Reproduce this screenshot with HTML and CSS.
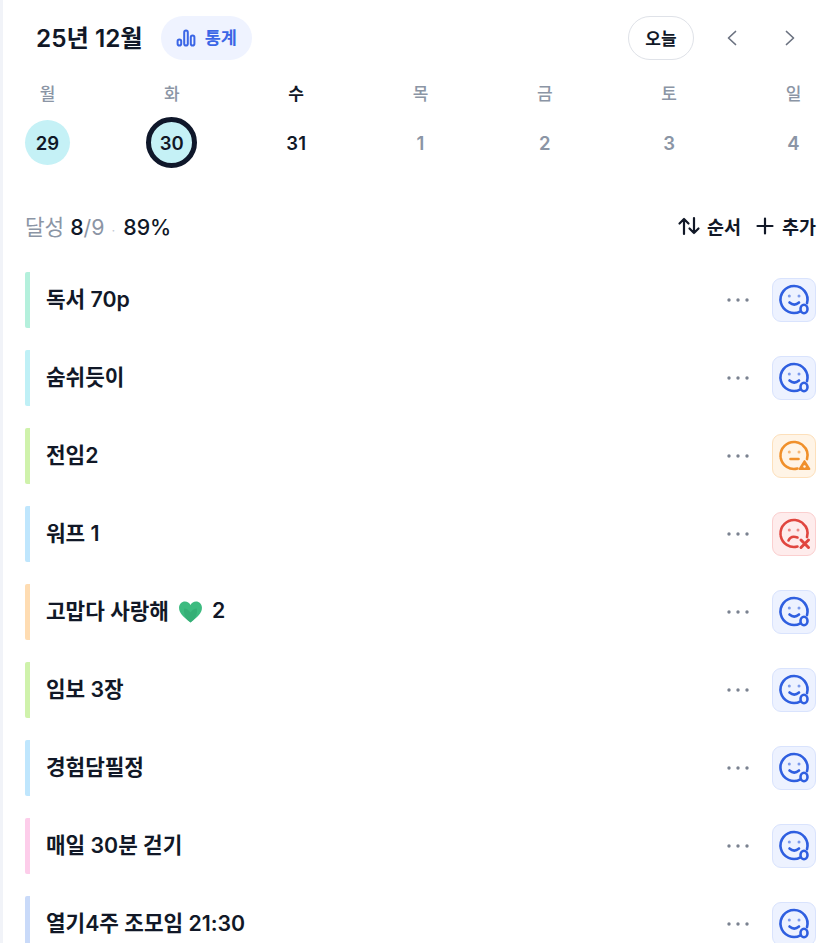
FILE: index.html
```html
<!DOCTYPE html>
<html lang="ko">
<head>
<meta charset="utf-8">
<title>습관</title>
<link rel="stylesheet" href="styles.css">
</head>
<body>
<svg class="defs" width="0" height="0" aria-hidden="true">
  <symbol id="face-ok" viewBox="0 0 44 44">
    <path d="M28.500 33.300A13.500 13.500 0 1 1 35 25.100" fill="none" stroke="currentColor" stroke-width="2.600" stroke-linecap="round"/>
    <circle cx="17.300" cy="18" r="1.500" fill="currentColor" opacity=".6"/>
    <circle cx="27" cy="18" r="1.500" fill="currentColor" opacity=".6"/>
    <path d="M17.500 24.500c3 2.600 6.500 2.600 9.500 0" fill="none" stroke="currentColor" stroke-width="2.600" stroke-linecap="round"/>
    <ellipse cx="32" cy="31" rx="3.500" ry="4.200" fill="none" stroke="currentColor" stroke-width="2.600"/>
  </symbol>
  <symbol id="face-warn" viewBox="0 0 44 44">
    <path d="M25.500 34.500A13.500 13.500 0 1 1 35 25.100" fill="none" stroke="currentColor" stroke-width="2.600" stroke-linecap="round" stroke-dasharray="22 1.500 30 1.500"/>
    <circle cx="17.300" cy="18" r="1.500" fill="currentColor" opacity=".6"/>
    <circle cx="27" cy="18" r="1.500" fill="currentColor" opacity=".6"/>
    <path d="M18.500 25h8" fill="none" stroke="currentColor" stroke-width="2.600" stroke-linecap="round"/>
    <path d="M32.500 27l5 8h-10z" fill="currentColor" stroke="currentColor" stroke-width="1.800" stroke-linejoin="round"/>
    <circle cx="32.500" cy="32.500" r="1.200" fill="#fff4e6"/>
  </symbol>
  <symbol id="face-bad" viewBox="0 0 44 44">
    <path d="M25.500 34.500A13.500 13.500 0 1 1 35 25.100" fill="none" stroke="currentColor" stroke-width="2.600" stroke-linecap="round" stroke-dasharray="22 1.500 30 1.500"/>
    <circle cx="17.300" cy="18" r="1.500" fill="currentColor" opacity=".6"/>
    <circle cx="26" cy="18" r="1.500" fill="currentColor" opacity=".6"/>
    <path d="M16.500 28.500c1.500-3.500 5-4.500 9-3" fill="none" stroke="currentColor" stroke-width="2.600" stroke-linecap="round"/>
    <path d="M29 28l7.500 7.500M36.500 28L29 35.500" fill="none" stroke="currentColor" stroke-width="3" stroke-linecap="round"/>
  </symbol>
  <symbol id="more" viewBox="0 0 22 6">
    <circle cx="2" cy="3" r="1.700"/>
    <circle cx="11" cy="3" r="1.700"/>
    <circle cx="20" cy="3" r="1.700"/>
  </symbol>
</svg>
<main class="page">
  <header class="top">
    <div class="top-left">
      <h1 class="month">25년 12월</h1>
      <button class="stats">
        <svg class="stats-icon" viewBox="0 0 20 20" fill="none" stroke="currentColor" stroke-width="2"><rect x="1.600" y="11.500" width="3.600" height="6" rx="1.800"/><rect x="8.200" y="2.600" width="3.600" height="15" rx="1.800"/><rect x="14.800" y="7.500" width="3.600" height="10" rx="1.800"/></svg>
        <span class="stats-label">통계</span>
      </button>
    </div>
    <div class="top-right">
      <button class="today">오늘</button>
      <button class="nav" aria-label="이전"><svg width="14" height="16" viewBox="0 0 14 16" fill="none" stroke="currentColor" stroke-width="1.700" stroke-linecap="round" stroke-linejoin="round"><path d="M10.500 1.500L3.500 8l7 6.500"/></svg></button>
      <button class="nav" aria-label="다음"><svg width="14" height="16" viewBox="0 0 14 16" fill="none" stroke="currentColor" stroke-width="1.700" stroke-linecap="round" stroke-linejoin="round"><path d="M3.500 1.500l7 6.500-7 6.500"/></svg></button>
    </div>
  </header>

  <section class="week">
    <div class="day"><span class="dow">월</span><span class="num done">29</span></div>
    <div class="day"><span class="dow">화</span><span class="num done current">30</span></div>
    <div class="day active"><span class="dow">수</span><span class="num">31</span></div>
    <div class="day"><span class="dow">목</span><span class="num">1</span></div>
    <div class="day"><span class="dow">금</span><span class="num">2</span></div>
    <div class="day"><span class="dow">토</span><span class="num">3</span></div>
    <div class="day"><span class="dow">일</span><span class="num">4</span></div>
  </section>

  <section class="summary">
    <p class="rate"><span class="muted">달성</span> <b>8</b><span class="muted">/9</span><span class="sep">·</span><b>89%</b></p>
    <div class="actions">
      <button class="action">
        <svg width="24" height="20" viewBox="0 0 24 20" fill="none" stroke="currentColor" stroke-width="2.200" stroke-linecap="round" stroke-linejoin="round"><path d="M7 18V3M2.500 7.500L7 3l4.500 4.500M17 2v15M12.500 12.500L17 17l4.500-4.500"/></svg>
        <span>순서</span>
      </button>
      <button class="action action-add">
        <svg width="18" height="18" viewBox="0 0 18 18" fill="none" stroke="currentColor" stroke-width="2.200" stroke-linecap="round"><path d="M9 1.500v15M1.500 9h15"/></svg>
        <span>추가</span>
      </button>
    </div>
  </section>

  <ul class="list">
    <li class="item c-mint"><span class="name">독서 70p</span><svg class="dots"><use href="#more"/></svg><span class="status ok"><svg width="44" height="44"><use href="#face-ok"/></svg></span></li>
    <li class="item c-cyan"><span class="name">숨쉬듯이</span><svg class="dots"><use href="#more"/></svg><span class="status ok"><svg width="44" height="44"><use href="#face-ok"/></svg></span></li>
    <li class="item c-lime"><span class="name">전임2</span><svg class="dots"><use href="#more"/></svg><span class="status warn"><svg width="44" height="44"><use href="#face-warn"/></svg></span></li>
    <li class="item c-sky"><span class="name">워프 1</span><svg class="dots"><use href="#more"/></svg><span class="status bad"><svg width="44" height="44"><use href="#face-bad"/></svg></span></li>
    <li class="item c-peach"><span class="name">고맙다 사랑해 <svg class="heart" viewBox="0 0 24 22"><path d="M12 21.500C5 16.500 1 12.500 1 7.500 1 4 3.600 1.500 6.700 1.500 9 1.500 11 2.800 12 4.800 13 2.800 15 1.500 17.300 1.500 20.400 1.500 23 4 23 7.500 23 12.500 19 16.500 12 21.500z" fill="#3dbb80"/><path d="M12 21.500C7 18 5 13 6 8c2 0 4.500 1.500 6 4 1.500-2.500 4-4 6-4 1 5-1 10-6 13.500z" fill="#2fa56e" opacity=".55"/></svg> 2</span><svg class="dots"><use href="#more"/></svg><span class="status ok"><svg width="44" height="44"><use href="#face-ok"/></svg></span></li>
    <li class="item c-lime"><span class="name">임보 3장</span><svg class="dots"><use href="#more"/></svg><span class="status ok"><svg width="44" height="44"><use href="#face-ok"/></svg></span></li>
    <li class="item c-sky"><span class="name">경험담필정</span><svg class="dots"><use href="#more"/></svg><span class="status ok"><svg width="44" height="44"><use href="#face-ok"/></svg></span></li>
    <li class="item c-pink"><span class="name">매일 30분 걷기</span><svg class="dots"><use href="#more"/></svg><span class="status ok"><svg width="44" height="44"><use href="#face-ok"/></svg></span></li>
    <li class="item c-blue"><span class="name">열기4주 조모임 21:30</span><svg class="dots"><use href="#more"/></svg><span class="status ok"><svg width="44" height="44"><use href="#face-ok"/></svg></span></li>
  </ul>
</main>
</body>
</html>
```

FILE: styles.css
```css
* { box-sizing: border-box; }
html, body { margin: 0; height: 100%; }
body {
  background: #fff;
  color: #111827;
  font-family: Inter, "Noto Sans CJK KR", sans-serif;
  overflow: hidden;
}
button {
  font: inherit;
  color: inherit;
  background: none;
  border: 0;
  padding: 0;
}
.defs { position: absolute; }
.page {
  height: 943px;
  overflow: hidden;
  border-left: 3px solid #f1f3f8;
  padding: 16px 11px 0 22px;
}
.top {
  display: flex;
  justify-content: space-between;
  align-items: center;
  height: 44px;
}
.top-left { display: flex; align-items: center; gap: 18px; padding-left: 11px; }
.month {
  margin: 0;
  padding-bottom: 4px;
  font-size: 24.3px;
  font-weight: 600;
}
.stats {
  display: flex;
  align-items: center;
  gap: 9px;
  height: 44px;
  width: 91px;
  padding-left: 15px;
  border-radius: 22px;
  background: #eff3ff;
  color: #3b66e6;
  font-size: 17.5px;
  font-weight: 600;
}
.stats-label { padding-bottom: 3px; }
.stats-icon { width: 20px; height: 20px; flex: none; }
.top-right { display: flex; align-items: center; gap: 31px; padding-right: 19px; }
.today {
  width: 66px;
  height: 44px;
  padding-bottom: 2px;
  border: 1px solid #dfe2e8;
  border-radius: 22px;
  font-size: 17px;
  font-weight: 600;
}
.nav { display: flex; color: #6b7280; margin-right: 13px; }
.nav:last-child { margin-right: 0; }
.week {
  display: flex;
  justify-content: space-between;
  margin-top: 22px;
}
.day {
  width: 45px;
  display: flex;
  flex-direction: column;
  align-items: center;
  gap: 14px;
  color: #8b95a5;
  font-weight: 600;
}
.day.active { color: #111827; }
.dow { font-size: 17px; line-height: 24px; font-weight: 500; }
.day.active .dow { font-weight: 600; }
.num {
  width: 45px;
  height: 45px;
  display: flex;
  align-items: center;
  justify-content: center;
  border-radius: 50%;
  font-size: 18.5px;
}
.num.done { background: #c5f1f6; color: #111827; }
.num.current {
  width: 51px;
  height: 51px;
  margin: -3px;
  border: 5.500px solid #0f172a;
}
.summary {
  display: flex;
  justify-content: space-between;
  align-items: center;
  margin-top: 46px;
  height: 30px;
}
.rate { margin: 0; padding-bottom: 2px; font-size: 21.3px; color: #111827; font-weight: 400; }
.rate b { font-weight: 500; }
.muted { color: #8b95a5; }
.sep { color: #c4cad4; margin: 0 8px 0 7px; font-size: 13px; }
.actions { display: flex; align-items: center; gap: 15px; }
.action {
  display: flex;
  align-items: center;
  gap: 6px;
  font-size: 18.500px;
  font-weight: 600;
}
.action-add { gap: 8px; }
.list {
  list-style: none;
  margin: 31px 0 0;
  padding: 0;
  display: flex;
  flex-direction: column;
  gap: 22px;
}
.item {
  display: flex;
  align-items: center;
  height: 56px;
  padding-left: 16px;
  border-left: 5px solid #ccc;
  border-radius: 2px;
}
.name {
  flex: 1;
  display: flex;
  align-items: center;
  gap: 9px;
  padding-bottom: 5px;
  font-size: 21.300px;
  font-weight: 600;
}
.heart { width: 25px; height: 23px; flex: none; margin-top: 3px; }
.dots {
  width: 22px;
  height: 6px;
  margin-right: 23px;
  fill: #7a8290;
  flex: none;
}
.status {
  width: 44px;
  height: 44px;
  display: flex;
  border-radius: 9px;
  border: 1px solid;
}
.status svg { margin: -1px; flex: none; }
.ok { background: #edf2ff; border-color: #d9e3fd; color: #2f5fe0; }
.warn { background: #fff4e6; border-color: #fde0bb; color: #f0902b; }
.bad { background: #feecec; border-color: #fbcfcf; color: #e0463f; }
.c-mint { border-left-color: #b4f0dc; }
.c-cyan { border-left-color: #bff0f6; }
.c-lime { border-left-color: #cff2ab; }
.c-sky { border-left-color: #bfe6fd; }
.c-peach { border-left-color: #fedcb2; }
.c-pink { border-left-color: #fdcdea; }
.c-blue { border-left-color: #c9daf9; }
```
